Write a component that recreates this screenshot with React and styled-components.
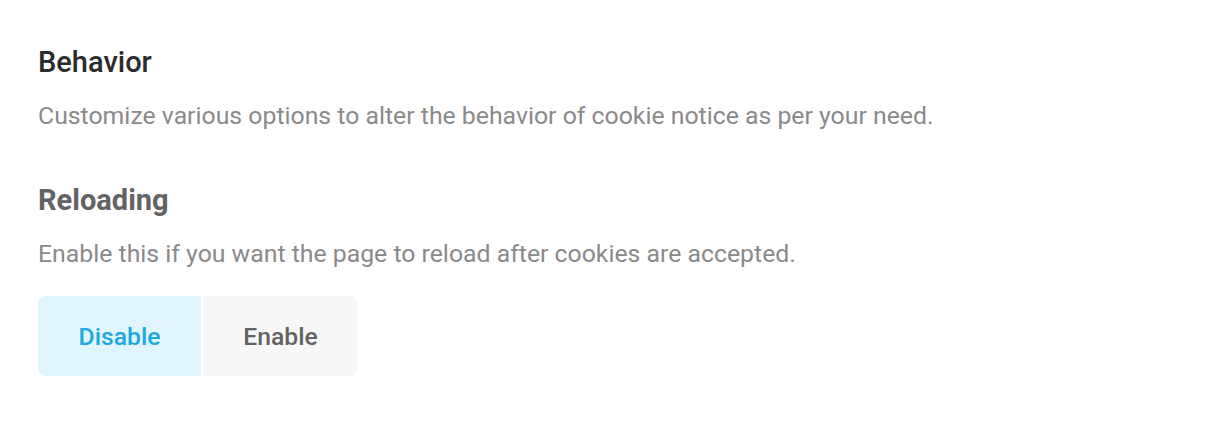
import React, { useState } from "react";
import styled, { createGlobalStyle } from "styled-components";

const GlobalStyle = createGlobalStyle`
  body {
    margin: 0;
    background: #ffffff;
    font-family: Roboto, "Liberation Sans", sans-serif;
  }
`;

const Page = styled.div`
  padding: 44px 38px;
`;

const Section = styled.section`
  display: flex;
  flex-direction: column;
  margin-bottom: ${(p) => p.$spacing || 0}px;
`;

const Title = styled.h2`
  margin: 0;
  font-size: 29px;
  line-height: 36px;
  font-weight: ${(p) => (p.$strong ? 700 : 500)};
  color: ${(p) => (p.$muted ? "#636363" : "#2b2b2b")};
`;

const Description = styled.p`
  margin: 20px 0 0;
  font-size: 24.8px;
  line-height: 32px;
  color: #8a8a8a;
`;

const Toggle = styled.div`
  display: flex;
  gap: 2px;
  margin-top: 26px;
  width: 320px;
`;

const Option = styled.button`
  height: 80px;
  border: none;
  padding: 0;
  font-family: inherit;
  font-size: 24.7px;
  font-weight: 500;
  cursor: pointer;
  width: ${(p) => p.$width}px;
  color: ${(p) => (p.$active ? "#1ea8e0" : "#636363")};
  background: ${(p) => (p.$active ? "#e0f5fe" : "#f7f7f7")};
  &:first-child {
    border-radius: 8px 0 0 8px;
  }
  &:last-child {
    border-radius: 0 8px 8px 0;
  }
`;

const options = [
  { key: "disable", label: "Disable", width: 163 },
  { key: "enable", label: "Enable", width: 155 },
];

export default function App() {
  const [reload, setReload] = useState("disable");
  return (
    <>
      <GlobalStyle />
      <Page>
        <Section $spacing={50}>
          <Title>Behavior</Title>
          <Description>
            Customize various options to alter the behavior of cookie notice as per your need.
          </Description>
        </Section>
        <Section>
          <Title $muted $strong>Reloading</Title>
          <Description>
            Enable this if you want the page to reload after cookies are accepted.
          </Description>
          <Toggle>
            {options.map((o) => (
              <Option
                key={o.key}
                $width={o.width}
                $active={reload === o.key}
                onClick={() => setReload(o.key)}
              >
                {o.label}
              </Option>
            ))}
          </Toggle>
        </Section>
      </Page>
    </>
  );
}
